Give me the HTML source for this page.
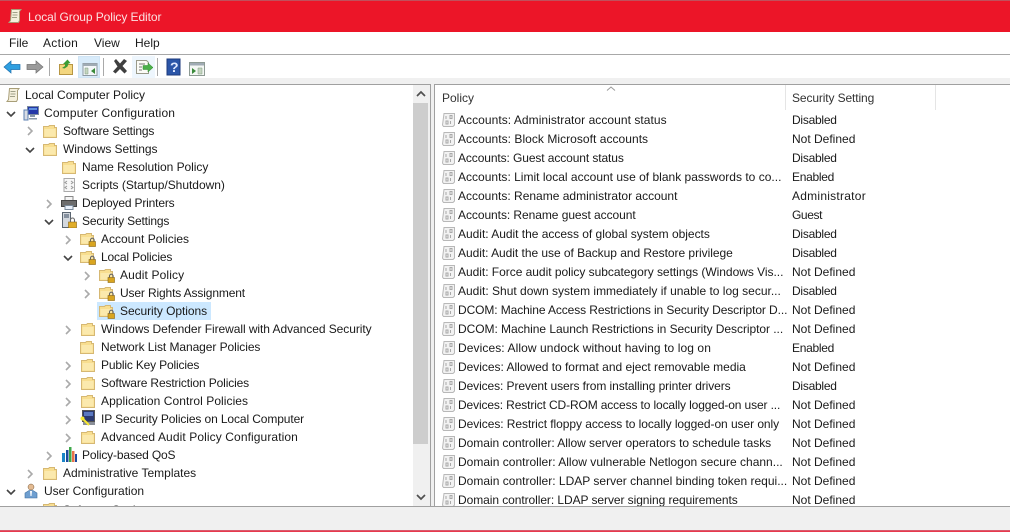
<!DOCTYPE html>
<html><head><meta charset="utf-8"><title>Local Group Policy Editor</title>
<style>
html,body{margin:0;padding:0}
body{width:1010px;height:532px;overflow:hidden;background:#f0f0f0;position:relative;font-family:"Liberation Sans",sans-serif;font-size:12px;color:#1a1a1a}
.a{position:absolute}
.t,.l,.v{position:absolute;white-space:nowrap;height:18px;line-height:18px}
.v{left:357px}
.l{left:23px}
.ic{position:absolute;width:16px;height:16px}
.ch{position:absolute;width:10px;height:10px}
#tree,#list{position:absolute;background:#fff;overflow:hidden}
#tree{left:0;top:85px;width:430px;height:421px}
#list{left:435px;top:85px;width:575px;height:421px}
</style></head><body>
<svg width="0" height="0" style="position:absolute">
<defs>
<symbol id="o" viewBox="0 0 10 10"><path d="M1 3l4 4 4-4" fill="none" stroke="#444" stroke-width="1.600"/></symbol>
<symbol id="c" viewBox="0 0 10 10"><path d="M3 1l4 4-4 4" fill="none" stroke="#aaa" stroke-width="1.600"/></symbol>
<symbol id="f" viewBox="0 0 16 16"><path d="M1.500 3.500h5l1-1h5v2h2v10h-13z" fill="#f8de90" stroke="#d6b873"/><path d="M2.500 6h11v7.500h-11z" fill="#fbe9ad"/></symbol>
<symbol id="lf" viewBox="0 0 16 16"><path d="M.5 3.500h5l1-1h5v2h2v9h-13z" fill="#f8de90" stroke="#d6b873"/><path d="M1.500 6h11v6.500h-11z" fill="#fbe9ad"/><rect x="9" y="10.500" width="6.500" height="5" fill="#d9a520" stroke="#8a6510" stroke-width=".6"/><path d="M10.500 10.500V9a1.800 1.800 0 0 1 3.600 0v1.500" fill="none" stroke="#666" stroke-width="1.100"/></symbol>
<symbol id="p" viewBox="0 0 16 16"><path d="M3 1.500h10.500v11.500l-1.500 1.500h-9.500l-1-1.500z" fill="#f2f2f2" stroke="#b8b8b8"/><path d="M5 4v3M9 3.500h2v3H9zM5 9h2v3H5zM9.500 9v3" fill="none" stroke="#a8a8a8"/></symbol>
<symbol id="s" viewBox="0 0 16 16"><path d="M4.500 1.500h9.500l-1.500 2v9l-1 2H2l1.500-2z" fill="#f5f0dc" stroke="#a89e78"/><path d="M5.500 4.500h5M5.500 7h5M5 9.500h5" stroke="#a0a088"/></symbol>
</defs></svg>

<!-- title -->
<div class="a" style="left:0;top:1px;width:1010px;height:31px;background:#ec1528"></div>
<div class="a" style="left:0;top:0;width:1010px;height:1px;background:#c0505c"></div>
<svg class="ic" style="left:7px;top:8px"><use href="#s"/></svg>
<div class="a" style="left:28px;top:8px;line-height:18px;color:#fbe3e3;letter-spacing:-.08px">Local Group Policy Editor</div>

<!-- menu -->
<div class="a" style="left:0;top:32px;width:1010px;height:22px;background:#fff"></div>
<div class="a" style="left:9px;top:34px;line-height:18px">File</div>
<div class="a" style="left:43px;top:34px;line-height:18px;letter-spacing:.3px">Action</div>
<div class="a" style="left:94px;top:34px;line-height:18px">View</div>
<div class="a" style="left:135px;top:34px;line-height:18px">Help</div>
<div class="a" style="left:0;top:54px;width:1010px;height:1px;background:#a8a8a8"></div>

<!-- toolbar -->
<div class="a" style="left:0;top:55px;width:1010px;height:23px;background:#fff"></div>
<div class="a" style="left:0;top:78px;width:1010px;height:6px;background:#f0f0f0"></div>
<div class="a" style="left:78px;top:56px;width:22px;height:22px;background:#d8ebfa;box-sizing:border-box;border:1px solid #cfe4f5"></div>
<div class="a" style="left:132px;top:56px;width:23px;height:22px;background:#eef6fd"></div>
<div class="a" style="left:49px;top:58px;width:1px;height:18px;background:#a9a9a9"></div>
<div class="a" style="left:103px;top:58px;width:1px;height:18px;background:#a9a9a9"></div>
<div class="a" style="left:157px;top:58px;width:1px;height:18px;background:#a9a9a9"></div>
<svg class="a" style="left:0;top:55px" width="210" height="23">
<path d="M4 12l7-6v3.500h9v5h-9V18z" fill="#2f9fe0" stroke="#1b6fae" stroke-width=".7"/>
<path d="M43 12l-7-6v3.500h-9v5h9V18z" fill="#9a9a9a" stroke="#707070" stroke-width=".7"/>
<path d="M59.500 9.500h13v10h-13z" fill="#f3d67f" stroke="#b79643"/>
<path d="M62 13l3-2 0-2-2 0 4.500-4.500 3 3.500-2 .5-1 3-3 2z" fill="#3c9c34"/>
<path d="M83 8.500h14v12H83z" fill="#f4f7f9" stroke="#8d99a2"/>
<path d="M83 8.500h14v2.500H83z" fill="#a0abb4"/>
<path d="M85 13h3v6h-3z" fill="#c5d5c0" stroke="#7f9c7f" stroke-width=".5"/>
<path d="M95 13v6l-4-3z" fill="#3a8a3a"/>
<path d="M114 6l2-2 4 4.500L124 4l3 2-4.500 5 4.500 5-2.500 2.500-4.500-4.500-4.500 4.500-2.500-2 4.500-5z" fill="#3f3f3f"/>
<path d="M136.500 5.500h10l2 2v11h-12z" fill="#fbfbf6" stroke="#9a9a8a"/>
<path d="M139 9h6M139 12h3M139 15h3" stroke="#777"/>
<path d="M143 10.500h5V8l5 4.500-5 4.500v-2.500h-5z" fill="#4bb04a" stroke="#2f8a2f" stroke-width=".5"/>
<rect x="167" y="4" width="13" height="16" fill="#2b55a8" stroke="#1c3a7c"/>
<text x="170" y="17" font-family="Liberation Sans" font-size="14" font-weight="bold" fill="#dfe8ff">?</text>
<path d="M189.500 7.500h15v13h-15z" fill="#f4f7f4" stroke="#8d9a93"/>
<path d="M190 8h14v2.500h-14z" fill="#a0abb4"/>
<path d="M192 13v6l4-3z" fill="#3a8a3a"/>
<path d="M198 13h4v6h-4z" fill="#c5d5c0" stroke="#7f9c7f" stroke-width=".5"/>
</svg>

<!-- panel frames -->
<div class="a" style="left:0;top:84px;width:1010px;height:1px;background:#a0a0a0"></div>
<div class="a" style="left:431px;top:84px;width:3px;height:423px;background:#f0f0f0"></div>
<div class="a" style="left:430px;top:84px;width:1px;height:423px;background:#a0a0a0"></div>
<div class="a" style="left:434px;top:84px;width:1px;height:423px;background:#a0a0a0"></div>
<div class="a" style="left:0;top:506px;width:1010px;height:1px;background:#a0a0a0"></div>

<div id="tree">
<svg class="ic" style="left:5px;top:2px"><use href="#s"/></svg><div class="t" style="left:25px;top:1px">Local Computer Policy</div>

<svg class="ch" style="left:6px;top:24px"><use href="#o"/></svg>
<svg class="ic" style="left:23px;top:20px" viewBox="0 0 16 16"><rect x="4.500" y="1.500" width="11" height="8" fill="#2438a8" stroke="#7a8aa0"/><path d="M6 3h8v2H6z" fill="#5f8fe0"/><path d="M1 5h4v10H1z" fill="#d8dce4" stroke="#5b7fb0"/><path d="M7 10h5v2H7zM6 13h8v1.500H6z" fill="#8899aa"/></svg>
<div class="t" style="left:44px;top:19px;letter-spacing:.17px">Computer Configuration</div>

<svg class="ch" style="left:25px;top:41px"><use href="#c"/></svg>
<svg class="ic" style="left:42px;top:38px"><use href="#f"/></svg><div class="t" style="left:63px;top:37px;letter-spacing:-.17px">Software Settings</div>

<svg class="ch" style="left:25px;top:60px"><use href="#o"/></svg>
<svg class="ic" style="left:42px;top:56px"><use href="#f"/></svg><div class="t" style="left:63px;top:55px;letter-spacing:-.06px">Windows Settings</div>

<svg class="ic" style="left:61px;top:74px"><use href="#f"/></svg><div class="t" style="left:82px;top:73px;letter-spacing:-.05px">Name Resolution Policy</div>

<svg class="ic" style="left:61px;top:92px" viewBox="0 0 16 16"><path d="M3 1.500h10.500v13H3z" fill="#f7f7f7" stroke="#aaa"/><path d="M6 4l-2 1.500L6 7M10 4l2 1.500L10 7M6 9l-2 1.500L6 12M10 9l2 1.500L10 12" fill="none" stroke="#999"/></svg>
<div class="t" style="left:82px;top:91px;letter-spacing:-.02px">Scripts (Startup/Shutdown)</div>

<svg class="ch" style="left:44px;top:114px"><use href="#c"/></svg>
<svg class="ic" style="left:61px;top:110px" viewBox="0 0 16 16"><path d="M4 1.500h8V6H4z" fill="#f5f5f5" stroke="#888"/><rect x="0.500" y="5.500" width="15" height="6" fill="#6d6d6d" stroke="#444"/><path d="M4 10.500h8v4H4z" fill="#e9f0fa" stroke="#7a8a9a"/></svg>
<div class="t" style="left:82px;top:109px;letter-spacing:-.17px">Deployed Printers</div>

<svg class="ch" style="left:44px;top:132px"><use href="#o"/></svg>
<svg class="ic" style="left:62px;top:127px" viewBox="0 0 16 16"><rect x=".5" y=".5" width="8" height="15" fill="#d3d8de" stroke="#5a6570"/><path d="M2 3h5M2 5h5" stroke="#3a4a60"/><rect x="6.500" y="10" width="8" height="6" fill="#e0ad2a" stroke="#8a6510" stroke-width=".6"/><path d="M8.500 10V8a2 2 0 0 1 4 0v2" fill="none" stroke="#666" stroke-width="1.100"/></svg>
<div class="t" style="left:82px;top:127px;letter-spacing:-.17px">Security Settings</div>

<svg class="ch" style="left:63px;top:150px"><use href="#c"/></svg>
<svg class="ic" style="left:80px;top:146px"><use href="#lf"/></svg><div class="t" style="left:101px;top:145px">Account Policies</div>

<svg class="ch" style="left:63px;top:168px"><use href="#o"/></svg>
<svg class="ic" style="left:80px;top:164px"><use href="#lf"/></svg><div class="t" style="left:101px;top:163px;letter-spacing:-.15px">Local Policies</div>

<svg class="ch" style="left:82px;top:186px"><use href="#c"/></svg>
<svg class="ic" style="left:99px;top:182px"><use href="#lf"/></svg><div class="t" style="left:120px;top:181px;letter-spacing:.13px">Audit Policy</div>

<svg class="ch" style="left:82px;top:204px"><use href="#c"/></svg>
<svg class="ic" style="left:99px;top:200px"><use href="#lf"/></svg><div class="t" style="left:120px;top:199px;letter-spacing:-.14px">User Rights Assignment</div>

<div class="a" style="left:97px;top:217px;width:114px;height:18px;background:#cce8ff"></div>
<svg class="ic" style="left:99px;top:218px"><use href="#lf"/></svg><div class="t" style="left:120px;top:217px;letter-spacing:-.06px">Security Options</div>

<svg class="ch" style="left:63px;top:240px"><use href="#c"/></svg>
<svg class="ic" style="left:80px;top:236px"><use href="#f"/></svg><div class="t" style="left:101px;top:235px;letter-spacing:-.06px">Windows Defender Firewall with Advanced Security</div>

<svg class="ic" style="left:79px;top:254px"><use href="#f"/></svg><div class="t" style="left:101px;top:253px;letter-spacing:-.07px">Network List Manager Policies</div>

<svg class="ch" style="left:63px;top:276px"><use href="#c"/></svg>
<svg class="ic" style="left:80px;top:272px"><use href="#f"/></svg><div class="t" style="left:101px;top:271px;letter-spacing:-.17px">Public Key Policies</div>

<svg class="ch" style="left:63px;top:294px"><use href="#c"/></svg>
<svg class="ic" style="left:80px;top:290px"><use href="#f"/></svg><div class="t" style="left:101px;top:289px;letter-spacing:-.14px">Software Restriction Policies</div>

<svg class="ch" style="left:63px;top:312px"><use href="#c"/></svg>
<svg class="ic" style="left:80px;top:308px"><use href="#f"/></svg><div class="t" style="left:101px;top:307px;letter-spacing:.06px">Application Control Policies</div>

<svg class="ch" style="left:63px;top:330px"><use href="#c"/></svg>
<svg class="ic" style="left:80px;top:325px" viewBox="0 0 16 16"><rect x="2.500" y=".5" width="12" height="11" fill="#2c3a70" stroke="#555"/><path d="M4 2h9v4H4z" fill="#5a78c0"/><path d="M3 12h12v3H3z" fill="#8a8f98"/><circle cx="2.500" cy="8.500" r="2" fill="#f6e832"/><path d="M3 9l6 6" stroke="#f6e832" stroke-width="2"/></svg>
<div class="t" style="left:101px;top:325px;letter-spacing:-.11px">IP Security Policies on Local Computer</div>

<svg class="ch" style="left:63px;top:348px"><use href="#c"/></svg>
<svg class="ic" style="left:80px;top:344px"><use href="#f"/></svg><div class="t" style="left:101px;top:343px;letter-spacing:.1px">Advanced Audit Policy Configuration</div>

<svg class="ch" style="left:44px;top:366px"><use href="#c"/></svg>
<svg class="ic" style="left:61px;top:361px" viewBox="0 0 16 16"><path d="M1 7h3v9H1z" fill="#1a86c8"/><path d="M5 4h2.500v12H5z" fill="#1c4a9c"/><path d="M8 1h2.500v15H8z" fill="#3da84a"/><path d="M11 5h2.500v11H11z" fill="#e8704a"/><path d="M14 8h2v8h-2z" fill="#1c4a9c"/></svg>
<div class="t" style="left:82px;top:361px;letter-spacing:-.17px">Policy-based QoS</div>

<svg class="ch" style="left:25px;top:384px"><use href="#c"/></svg>
<svg class="ic" style="left:42px;top:380px"><use href="#f"/></svg><div class="t" style="left:63px;top:379px">Administrative Templates</div>

<svg class="ch" style="left:6px;top:402px"><use href="#o"/></svg>
<svg class="ic" style="left:23px;top:398px" viewBox="0 0 16 16"><circle cx="8" cy="4" r="3" fill="#e3bb92" stroke="#7a5a3a" stroke-width=".5"/><path d="M2 15V10l4-2.500h4l4 2.500v5z" fill="#6f9fd0" stroke="#3f6f9f" stroke-width=".6"/><path d="M7 8h2l-.5 5h-1z" fill="#fff"/></svg>
<div class="t" style="left:44px;top:397px">User Configuration</div>

<svg class="ic" style="left:42px;top:416px"><use href="#f"/></svg><div class="t" style="left:63px;top:416px;letter-spacing:-.17px">Software Settings</div>

<div class="a" style="left:413px;top:0;width:17px;height:421px;background:#f0f0f0"></div>
<div class="a" style="left:413px;top:18px;width:15px;height:341px;background:#cdcdcd"></div>
<svg class="a" style="left:416px;top:5px" width="10" height="8"><path d="M1 6l4-4 4 4" fill="none" stroke="#505050" stroke-width="1.700"/></svg>
<svg class="a" style="left:416px;top:408px" width="10" height="8"><path d="M1 2l4 4 4-4" fill="none" stroke="#505050" stroke-width="1.700"/></svg>
</div>

<div id="list">
<div class="a" style="left:350px;top:0;width:1px;height:25px;background:#e5e5e5"></div>
<div class="a" style="left:500px;top:0;width:1px;height:25px;background:#e5e5e5"></div>
<svg class="a" style="left:171px;top:0" width="10" height="7"><path d="M1 5.500l4-3.500 4 3.500" fill="none" stroke="#9a9a9a"/></svg>
<div class="t" style="left:7px;top:4px;color:#333">Policy</div>
<div class="t" style="left:357px;top:4px;color:#333;letter-spacing:-.12px">Security Setting</div>

<svg class="ic" style="left:6px;top:27px"><use href="#p"/></svg><div class="l" style="top:26px;letter-spacing:.05px">Accounts: Administrator account status</div><div class="v" style="top:26px;letter-spacing:-.25px">Disabled</div>
<svg class="ic" style="left:6px;top:46px"><use href="#p"/></svg><div class="l" style="top:45px;letter-spacing:.04px">Accounts: Block Microsoft accounts</div><div class="v" style="top:45px">Not Defined</div>
<svg class="ic" style="left:6px;top:65px"><use href="#p"/></svg><div class="l" style="top:64px;letter-spacing:-.1px">Accounts: Guest account status</div><div class="v" style="top:64px;letter-spacing:-.25px">Disabled</div>
<svg class="ic" style="left:6px;top:84px"><use href="#p"/></svg><div class="l" style="top:83px;letter-spacing:.01px">Accounts: Limit local account use of blank passwords to co...</div><div class="v" style="top:83px;letter-spacing:-.3px">Enabled</div>
<svg class="ic" style="left:6px;top:103px"><use href="#p"/></svg><div class="l" style="top:102px">Accounts: Rename administrator account</div><div class="v" style="top:102px;letter-spacing:.25px">Administrator</div>
<svg class="ic" style="left:6px;top:122px"><use href="#p"/></svg><div class="l" style="top:121px;letter-spacing:-.06px">Accounts: Rename guest account</div><div class="v" style="top:121px;letter-spacing:-.4px">Guest</div>
<svg class="ic" style="left:6px;top:141px"><use href="#p"/></svg><div class="l" style="top:140px;letter-spacing:-.02px">Audit: Audit the access of global system objects</div><div class="v" style="top:140px;letter-spacing:-.25px">Disabled</div>
<svg class="ic" style="left:6px;top:160px"><use href="#p"/></svg><div class="l" style="top:159px;letter-spacing:-.04px">Audit: Audit the use of Backup and Restore privilege</div><div class="v" style="top:159px;letter-spacing:-.25px">Disabled</div>
<svg class="ic" style="left:6px;top:179px"><use href="#p"/></svg><div class="l" style="top:178px;letter-spacing:-.03px">Audit: Force audit policy subcategory settings (Windows Vis...</div><div class="v" style="top:178px">Not Defined</div>
<svg class="ic" style="left:6px;top:198px"><use href="#p"/></svg><div class="l" style="top:197px">Audit: Shut down system immediately if unable to log secur...</div><div class="v" style="top:197px;letter-spacing:-.25px">Disabled</div>
<svg class="ic" style="left:6px;top:217px"><use href="#p"/></svg><div class="l" style="top:216px;letter-spacing:-.1px">DCOM: Machine Access Restrictions in Security Descriptor D...</div><div class="v" style="top:216px">Not Defined</div>
<svg class="ic" style="left:6px;top:236px"><use href="#p"/></svg><div class="l" style="top:235px;letter-spacing:-.05px">DCOM: Machine Launch Restrictions in Security Descriptor ...</div><div class="v" style="top:235px">Not Defined</div>
<svg class="ic" style="left:6px;top:255px"><use href="#p"/></svg><div class="l" style="top:254px;letter-spacing:.09px">Devices: Allow undock without having to log on</div><div class="v" style="top:254px;letter-spacing:-.3px">Enabled</div>
<svg class="ic" style="left:6px;top:274px"><use href="#p"/></svg><div class="l" style="top:273px;letter-spacing:-.02px">Devices: Allowed to format and eject removable media</div><div class="v" style="top:273px">Not Defined</div>
<svg class="ic" style="left:6px;top:293px"><use href="#p"/></svg><div class="l" style="top:292px;letter-spacing:-.09px">Devices: Prevent users from installing printer drivers</div><div class="v" style="top:292px;letter-spacing:-.25px">Disabled</div>
<svg class="ic" style="left:6px;top:312px"><use href="#p"/></svg><div class="l" style="top:311px;letter-spacing:-.13px">Devices: Restrict CD-ROM access to locally logged-on user ...</div><div class="v" style="top:311px">Not Defined</div>
<svg class="ic" style="left:6px;top:331px"><use href="#p"/></svg><div class="l" style="top:330px;letter-spacing:-.06px">Devices: Restrict floppy access to locally logged-on user only</div><div class="v" style="top:330px">Not Defined</div>
<svg class="ic" style="left:6px;top:350px"><use href="#p"/></svg><div class="l" style="top:349px;letter-spacing:-.04px">Domain controller: Allow server operators to schedule tasks</div><div class="v" style="top:349px">Not Defined</div>
<svg class="ic" style="left:6px;top:369px"><use href="#p"/></svg><div class="l" style="top:368px;letter-spacing:.01px">Domain controller: Allow vulnerable Netlogon secure chann...</div><div class="v" style="top:368px">Not Defined</div>
<svg class="ic" style="left:6px;top:388px"><use href="#p"/></svg><div class="l" style="top:387px;letter-spacing:.01px">Domain controller: LDAP server channel binding token requi...</div><div class="v" style="top:387px">Not Defined</div>
<svg class="ic" style="left:6px;top:407px"><use href="#p"/></svg><div class="l" style="top:406px;letter-spacing:-.07px">Domain controller: LDAP server signing requirements</div><div class="v" style="top:406px">Not Defined</div>
</div>

<!-- bottom -->
<div class="a" style="left:0;top:507px;width:1010px;height:23px;background:#f0f0f0"></div>
<div class="a" style="left:0;top:530px;width:1010px;height:1px;background:#d85a6c"></div>
<div class="a" style="left:0;top:531px;width:1010px;height:1px;background:#e8394d"></div>
</body></html>
